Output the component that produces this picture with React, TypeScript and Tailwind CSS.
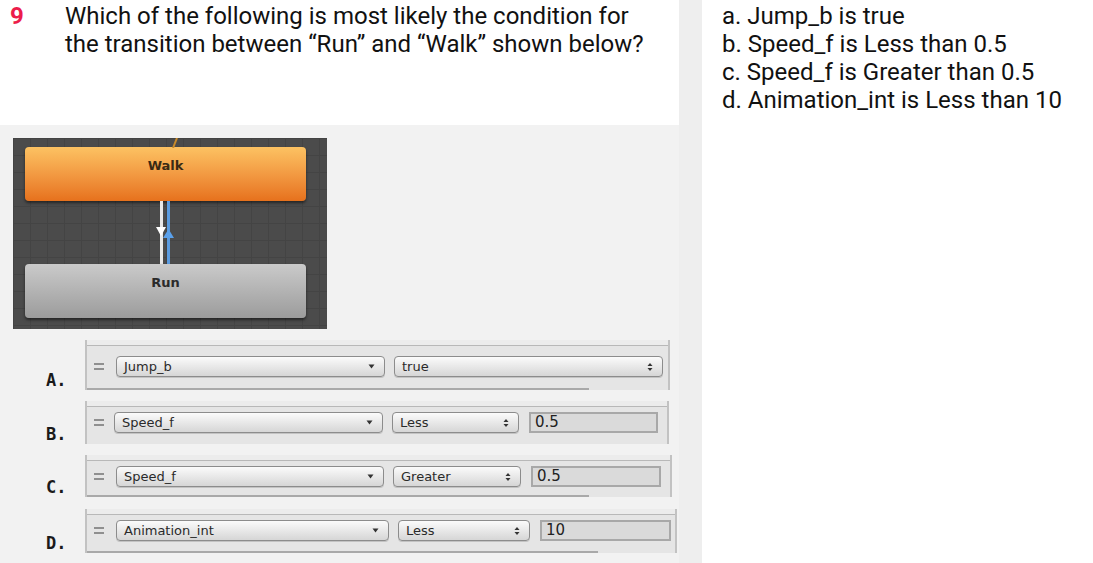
import React from "react";

type Row = {
  label: string;
  param: string;
  op: string;
  value?: string;
  rowCls: string;
  panelCls: string;
  paramCls: string;
  opCls: string;
  valueCls: string;
  barCls: string;
};

const rows: Row[] = [
  {
    label: "A.",
    param: "Jump_b",
    op: "true",
    rowCls: "mt-[11px] h-[50px]",
    panelCls: "w-[585px] pt-[8px]",
    paramCls: "w-[269px] ml-[12px]",
    opCls: "w-[269px]",
    valueCls: "",
    barCls: "w-[502px]",
  },
  {
    label: "B.",
    param: "Speed_f",
    op: "Less",
    value: "0.5",
    rowCls: "mt-[11px] h-[43px]",
    panelCls: "w-[584px] pt-[3px]",
    paramCls: "w-[269px] ml-[10px]",
    opCls: "w-[127px]",
    valueCls: "w-[129px]",
    barCls: "w-0",
  },
  {
    label: "C.",
    param: "Speed_f",
    op: "Greater",
    value: "0.5",
    rowCls: "mt-[11px] h-[42px]",
    panelCls: "w-[587px] pt-[3px]",
    paramCls: "w-[268px] ml-[12px]",
    opCls: "w-[128px]",
    valueCls: "w-[130px]",
    barCls: "w-[502px]",
  },
  {
    label: "D.",
    param: "Animation_int",
    op: "Less",
    value: "10",
    rowCls: "mt-[12px] h-[44px]",
    panelCls: "w-[592px] pt-[3px]",
    paramCls: "w-[273px] ml-[12px]",
    opCls: "w-[132px]",
    valueCls: "w-[131px]",
    barCls: "w-[511px]",
  },
];

function UpDown() {
  return (
    <svg width="6" height="10" viewBox="0 0 6 10" className="shrink-0">
      <path d="M3 1 L5.5 4 L0.5 4 Z" fill="#333" />
      <path d="M3 9 L5.5 6 L0.5 6 Z" fill="#333" />
    </svg>
  );
}

function Down() {
  return (
    <svg width="7" height="5" viewBox="0 0 7 5" className="shrink-0">
      <path d="M0.5 0.5 L6.5 0.5 L3.5 4.5 Z" fill="#333" />
    </svg>
  );
}

function Popup({ text, cls, updown }: { text: string; cls: string; updown?: boolean }) {
  return (
    <div
      className={`flex h-[21px] items-center justify-between rounded-[4px] border border-[#8c8c8c] bg-gradient-to-b from-[#fbfbfb] to-[#d6d6d6] pl-[7px] pr-[9px] text-[13px] leading-none text-[#2a2a2a] shadow-[0_1px_0_rgba(0,0,0,0.15)] ${cls}`}
    >
      <span>{text}</span>
      {updown ? <UpDown /> : <Down />}
    </div>
  );
}

function ConditionRow({ r }: { r: Row }) {
  return (
    <div className={`flex items-end ${r.rowCls}`}>
      <div className="w-[85px] pb-[1px] pl-[46px] font-['DejaVu_Sans_Mono',monospace] text-[17px] font-bold leading-none text-[#1a1a1a]">
        {r.label}
      </div>
      <div className={`relative flex h-full flex-col border-x-2 border-[#c2c2c2] bg-[#e5e5e5] ${r.panelCls}`}>
        <div className="absolute left-0 right-0 top-0 h-[6px] border-b border-[#b8b8b8] bg-[#ececec]" />
        <div className="mt-[8px] flex items-center font-['DejaVu_Sans',sans-serif]">
          <span className="ml-[7px] flex w-[10px] flex-col gap-[3px]">
            <span className="h-[2px] w-[10px] bg-[#8f8f8f]" />
            <span className="h-[2px] w-[10px] bg-[#8f8f8f]" />
          </span>
          <Popup text={r.param} cls={r.paramCls} />
          <Popup text={r.op} cls={`ml-[9px] ${r.opCls}`} updown />
          {r.value && (
            <div
              className={`ml-[10px] flex h-[21px] items-center border-2 border-[#a8a8a8] bg-[#dadada] pl-[4px] text-[15px] leading-none text-[#222] ${r.valueCls}`}
            >
              {r.value}
            </div>
          )}
        </div>
        <div className={`absolute bottom-0 left-0 h-[2px] bg-[#a9a9a9] ${r.barCls}`} />
      </div>
    </div>
  );
}

function Diagram() {
  return (
    <div className="ml-[13px] mt-[13px] flex h-[191px] w-[314px] flex-col bg-[#4b4b4b] bg-[linear-gradient(#444444_1px,transparent_1px),linear-gradient(90deg,#444444_1px,transparent_1px)] bg-size-[17px_17px] pl-[12px] pr-[21px] pt-[9px] font-['DejaVu_Sans',sans-serif]">
      <div className="relative">
        <svg width="10" height="10" className="absolute left-[145px] top-[-9px]">
          <line x1="3" y1="10" x2="7" y2="0" stroke="#c98a2a" strokeWidth="2" />
        </svg>
      </div>
      <div className="flex h-[54px] items-start justify-center rounded-[4px] bg-gradient-to-b from-[#fcc262] to-[#e6711c] pt-[9px] text-[13px] font-bold text-[#3a2a14] shadow-[0_2px_3px_rgba(0,0,0,0.5)]">
        Walk
      </div>
      <svg width="281" height="63" viewBox="0 0 281 63">
        <line x1="136.5" y1="0" x2="136.5" y2="63" stroke="#e8e8e8" strokeWidth="3" />
        <line x1="143.5" y1="0" x2="143.5" y2="63" stroke="#5a9be0" strokeWidth="3" />
        <path d="M131 26 L141 26 L136 35 Z" fill="#ffffff" />
        <path d="M143.5 28 L149 37 L138 37 Z" fill="#5aa0ea" />
      </svg>
      <div className="flex h-[54px] items-start justify-center rounded-[4px] bg-gradient-to-b from-[#cacaca] to-[#9c9c9c] pt-[9px] text-[13px] font-bold text-[#2a2a2a] shadow-[0_2px_3px_rgba(0,0,0,0.5)]">
        Run
      </div>
    </div>
  );
}

export default function App() {
  return (
    <div className="flex h-[563px] w-[1093px] bg-white font-['Roboto',sans-serif]">
      <div className="flex w-[702px] flex-col bg-[#eeeeee]">
        <div className="flex h-full w-[679px] flex-col">
          {/* question header */}
          <div className="flex h-[125px] bg-white pt-[2px] text-[24px] leading-[28px] text-[#111]">
            <span className="w-[65px] pl-[10px] font-bold text-[#ec1d4b]">9</span>
            <p>
              Which of the following is most likely the condition for
              <br />
              the transition between “Run” and “Walk” shown below?
            </p>
          </div>
          {/* picture */}
          <div className="flex flex-1 flex-col bg-[#f2f2f2]">
            <Diagram />
            {rows.map(r => (
              <ConditionRow key={r.label} r={r} />
            ))}
          </div>
        </div>
      </div>
      {/* answers */}
      <div className="pl-[20px] pt-[2px] text-[24px] leading-[28px] text-[#111]">
        <p>a. Jump_b is true</p>
        <p>b. Speed_f is Less than 0.5</p>
        <p>c. Speed_f is Greater than 0.5</p>
        <p>d. Animation_int is Less than 10</p>
      </div>
    </div>
  );
}
